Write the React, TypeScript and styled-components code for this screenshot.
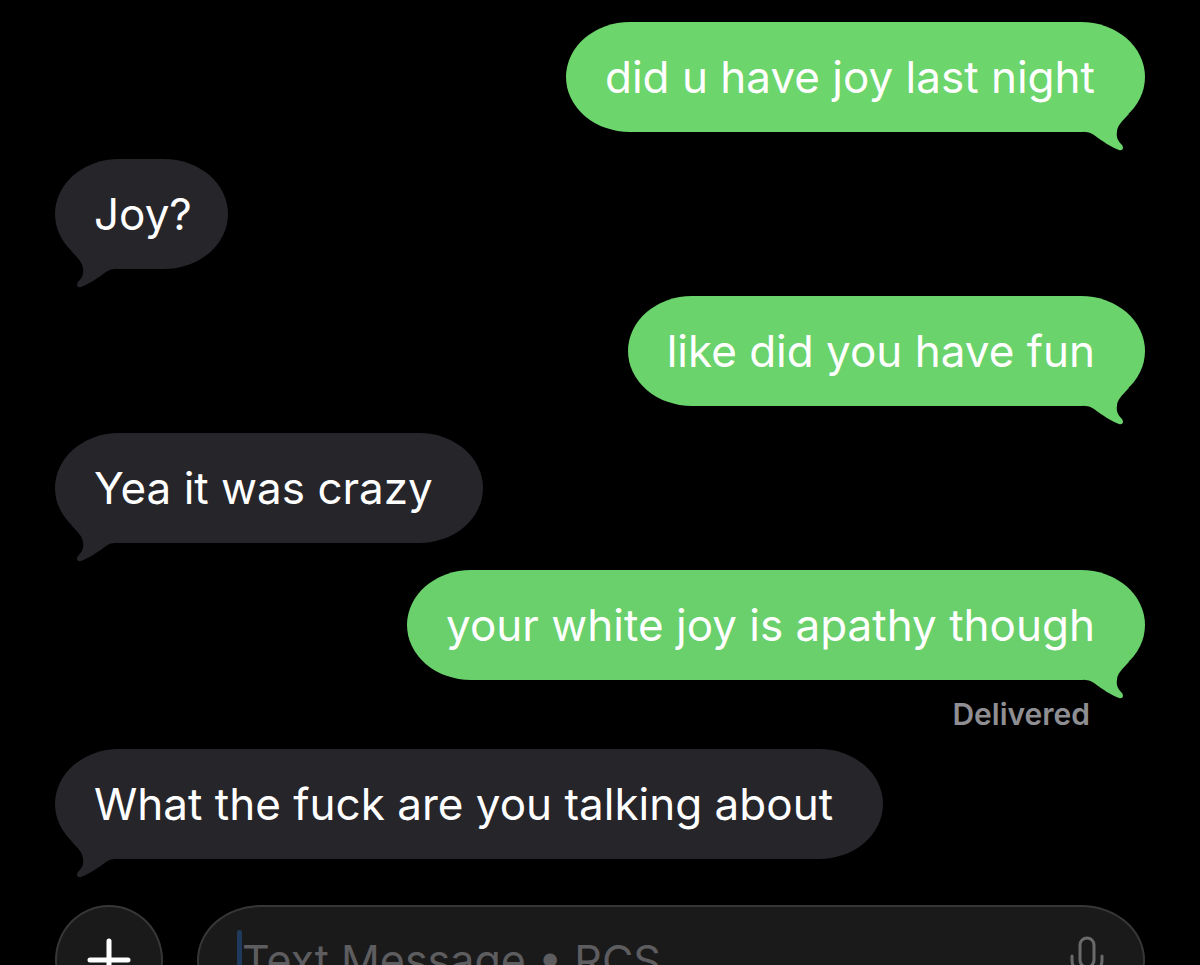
import React from "react";
import styled, { createGlobalStyle } from "styled-components";

const GlobalStyle = createGlobalStyle`
  * { box-sizing: border-box; }
  body {
    margin: 0;
    background: #000;
    font-family: Inter, "Liberation Sans", sans-serif;
    -webkit-font-smoothing: antialiased;
  }
`;

const Screen = styled.main`
  height: 100vh;
  overflow: hidden;
  padding: 22px 55px 0;
  background: #000;
`;

const Thread = styled.ol`
  list-style: none;
  margin: 0;
  padding: 0;
  display: flex;
  flex-direction: column;
  gap: 27px;
`;

const Row = styled.li<{ $sent: boolean }>`
  display: flex;
  flex-direction: column;
  align-items: ${(p) => (p.$sent ? "flex-end" : "flex-start")};
`;

const Bubble = styled.p<{ $fill: string; $short: boolean }>`
  position: relative;
  margin: 0;
  padding: 0 ${(p) => (p.$short ? 36 : 50)}px 0 39px;
  border-radius: 64px / 55px;
  background: ${(p) => p.$fill};
  color: #fff;
  font-size: 44px;
  line-height: 110px;
  white-space: nowrap;
`;

const TailShape = styled.svg<{ $sent: boolean }>`
  position: absolute;
  bottom: -20px;
  width: 60px;
  height: 48px;
  ${(p) => (p.$sent ? "right: 0;" : "left: 0; transform: scaleX(-1);")}
`;

const Receipt = styled.span`
  margin-bottom: -10px;
  padding: 16px 55px 0 0;
  color: #8e8e93;
  font-size: 30px;
  font-weight: 600;
  line-height: 36px;
`;

const Composer = styled.form`
  display: flex;
  gap: 34px;
  padding-top: 46px;
`;

const AddButton = styled.button`
  flex: none;
  display: grid;
  place-items: center;
  width: 108px;
  height: 110px;
  padding: 0;
  border: 2px solid #373738;
  border-radius: 50%;
  background: #1a1a1a;
`;

const Field = styled.div`
  flex: 1;
  display: flex;
  align-items: center;
  height: 110px;
  padding: 0 38px;
  border: 2px solid #373738;
  border-radius: 64px / 55px;
  background: #1a1a1a;
`;

const Caret = styled.span`
  flex: none;
  width: 5px;
  height: 60px;
  border-radius: 3px;
  background: #1f3a5c;
`;

const MessageInput = styled.input`
  flex: 1;
  min-width: 0;
  padding: 0;
  border: 0;
  outline: 0;
  background: transparent;
  color: #fff;
  font: 400 43px/58px Inter, "Liberation Sans", sans-serif;

  &::placeholder {
    color: #5d5d60;
    opacity: 1;
  }
`;

const MicButton = styled.button`
  flex: none;
  display: grid;
  width: 36px;
  height: 50px;
  padding: 0;
  border: 0;
  background: transparent;
`;

type Message = { text: string; sent: boolean; fill: string; receipt?: string };

const messages: Message[] = [
  { text: "did u have joy last night", sent: true, fill: "#6cd56b" },
  { text: "Joy?", sent: false, fill: "#26252a" },
  { text: "like did you have fun", sent: true, fill: "#6ad36b" },
  { text: "Yea it was crazy", sent: false, fill: "#26252a" },
  { text: "your white joy is apathy though", sent: true, fill: "#69d06b", receipt: "Delivered" },
  { text: "What the fuck are you talking about", sent: false, fill: "#26252a" },
];

function Tail({ sent, fill }: { sent: boolean; fill: string }) {
  return (
    <TailShape $sent={sent} viewBox="0 0 60 48" aria-hidden="true">
      <path
        fill={fill}
        d="M0 16 V28 C4 28 6 29 9 31 C17 37 26 43 34 46 C38 47 39 44 37 41 C33 37 31 33 32 28 C32 22 37 17 44 10 Z"
      />
    </TailShape>
  );
}

export default function App() {
  return (
    <>
      <GlobalStyle />
      <Screen>
        <Thread>
          {messages.map((m) => (
            <Row key={m.text} $sent={m.sent}>
              <Bubble $fill={m.fill} $short={m.text.length < 6}>
                <Tail sent={m.sent} fill={m.fill} />
                {m.text}
              </Bubble>
              {m.receipt && <Receipt>{m.receipt}</Receipt>}
            </Row>
          ))}
        </Thread>
        <Composer onSubmit={(e) => e.preventDefault()}>
          <AddButton type="button" aria-label="Add attachment">
            <svg width="44" height="44" viewBox="0 0 44 44" stroke="#fff" strokeWidth="5" strokeLinecap="round">
              <path d="M22 3V41M3 22H41" />
            </svg>
          </AddButton>
          <Field>
            <Caret />
            <MessageInput aria-label="Message" placeholder="Text Message • RCS" />
            <MicButton type="button" aria-label="Dictate">
              <svg width="36" height="50" viewBox="0 0 36 50" fill="none" stroke="#6a6a6d" strokeWidth="3" strokeLinecap="round">
                <rect x="11" y="3" width="14" height="29" rx="7" />
                <path d="M3 21V25A15 15 0 0 0 33 25V21M18 40V47M11 47H25" />
              </svg>
            </MicButton>
          </Field>
        </Composer>
      </Screen>
    </>
  );
}
